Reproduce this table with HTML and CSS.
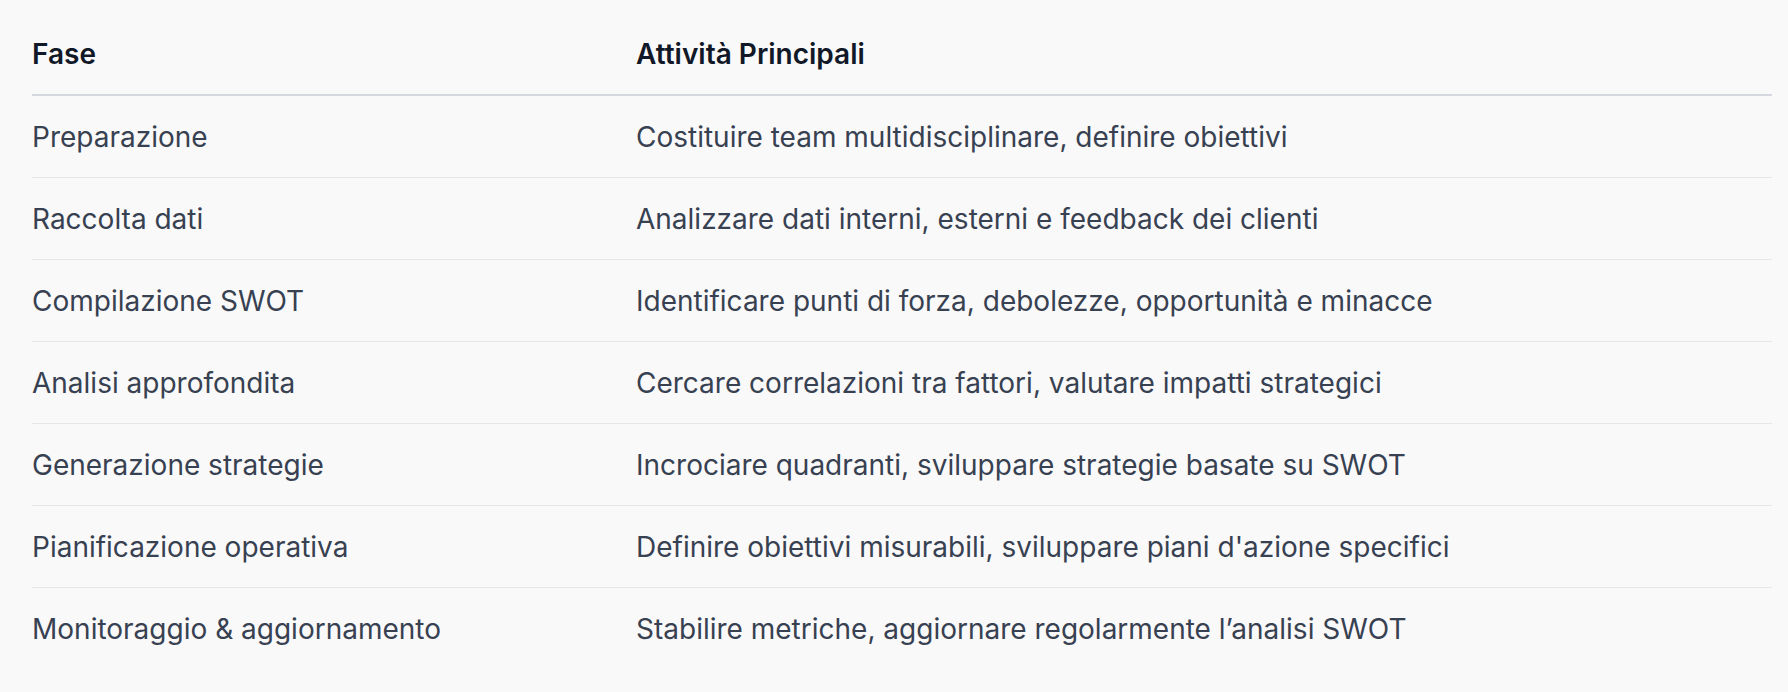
FILE: index.html
```html
<!DOCTYPE html>
<html lang="it">
<head>
<meta charset="utf-8">
<title>Fasi SWOT</title>
<link rel="stylesheet" href="styles.css">
</head>
<body>
<main class="page">
  <table class="phase-table">
    <thead>
      <tr>
        <th class="col-phase">Fase</th>
        <th>Attività Principali</th>
      </tr>
    </thead>
    <tbody>
      <tr><td>Preparazione</td><td>Costituire team multidisciplinare, definire obiettivi</td></tr>
      <tr><td>Raccolta dati</td><td>Analizzare dati interni, esterni e feedback dei clienti</td></tr>
      <tr><td>Compilazione SWOT</td><td>Identificare punti di forza, debolezze, opportunità e minacce</td></tr>
      <tr><td>Analisi approfondita</td><td>Cercare correlazioni tra fattori, valutare impatti strategici</td></tr>
      <tr><td>Generazione strategie</td><td>Incrociare quadranti, sviluppare strategie basate su SWOT</td></tr>
      <tr><td>Pianificazione operativa</td><td>Definire obiettivi misurabili, sviluppare piani d'azione specifici</td></tr>
      <tr><td>Monitoraggio &amp; aggiornamento</td><td>Stabilire metriche, aggiornare regolarmente l’analisi SWOT</td></tr>
    </tbody>
  </table>
</main>
</body>
</html>
```

FILE: styles.css
```css
html, body {
  margin: 0;
  padding: 0;
  background: #faf9f9;
}

.page {
  padding: 13px 16px 0 32px;
  font-family: Inter, "Noto Sans", "Liberation Sans", sans-serif;
}

.phase-table {
  width: 1740px;
  border-collapse: collapse;
  table-layout: fixed;
  font-size: 28px;
  line-height: 42px;
}

.phase-table th,
.phase-table td {
  text-align: left;
  padding: 20px 0 19px 0;
  vertical-align: middle;
}

.phase-table th {
  font-weight: 600;
  color: #111827;
  border-bottom: 2px solid #d5d8de;
}

.col-phase {
  width: 604px;
}

.phase-table td {
  color: #374151;
  font-weight: 400;
  border-bottom: 1px solid #e6e6e8;
}

.phase-table tbody tr:last-child td {
  border-bottom: none;
}
```
